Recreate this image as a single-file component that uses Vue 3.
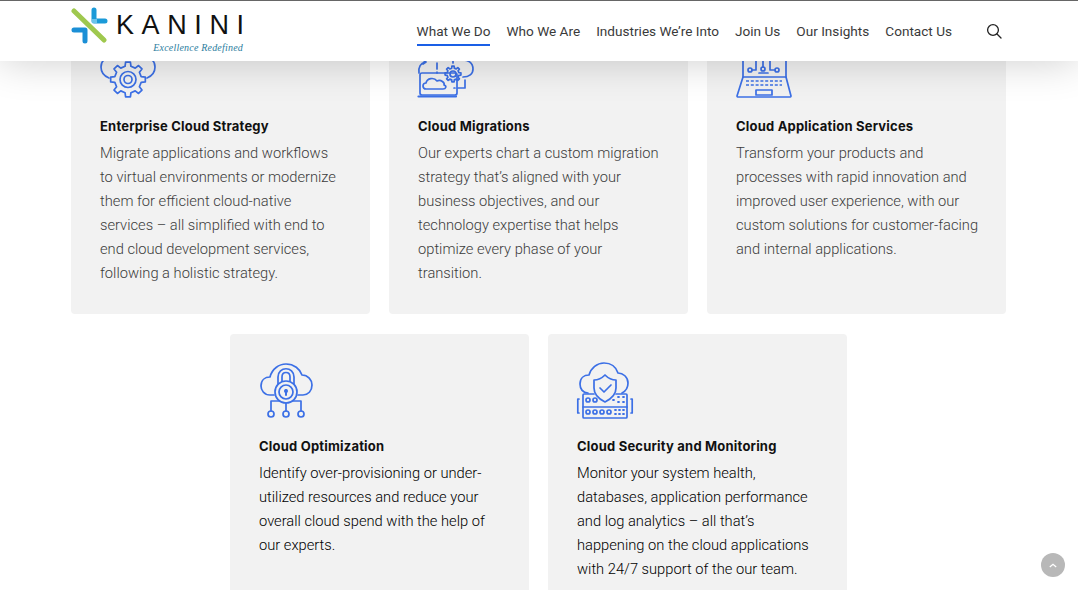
<template>
  <div class="page">
    <header class="site-header">
      <a class="logo" href="#">
        <svg class="logo-mark" viewBox="71 7 38 38" width="38" height="38">
          <path d="M94 10V21H105" fill="none" stroke="#1b9ad8" stroke-width="5" stroke-linecap="round" stroke-linejoin="round" />
          <path d="M74 30H85V41" fill="none" stroke="#1b8fd6" stroke-width="5" stroke-linecap="round" stroke-linejoin="round" />
          <path d="M74 11L104 40" fill="none" stroke="#9fc84e" stroke-width="5" stroke-linecap="round" />
          <rect x="92" y="19" width="5" height="4" fill="#6cc4ea" />
        </svg>
        <div class="logo-text">
          <span class="logo-name">KANINI</span>
          <span class="logo-tag">Excellence Redefined</span>
        </div>
      </a>
      <nav class="main-nav">
        <a v-for="item in navItems" :key="item" href="#" class="nav-link" :class="{ active: item === 'What We Do' }">{{ item }}</a>
      </nav>
      <svg class="search-icon" viewBox="0 0 16 16" width="16" height="16" fill="none" stroke="#222" stroke-width="1.3">
        <circle cx="7" cy="7" r="5.4" />
        <path d="M11 11L15 15" stroke-linecap="round" />
      </svg>
    </header>

    <main class="services">
      <section class="row" v-for="(row, r) in rows" :key="r" :class="'row-' + (r + 1)">
        <article class="card" v-for="card in row" :key="card.title">
          <svg class="card-icon" viewBox="0 0 56 56" width="56" height="56" fill="none" stroke="#3c70e6" stroke-width="1.7" stroke-linecap="round" stroke-linejoin="round">
            <template v-if="card.icon === 'gear'">
              <path d="M9 36C4 34 1 30 1 25C1 19 6 14 12 14C15 7 21 3 28 3C35 3 41 7 44 14C50 14 55 19 55 25C55 30 52 34 47 36" />
              <path :d="gearPath" />
              <circle cx="28" cy="37.5" r="8" />
              <circle cx="28" cy="37.5" r="4" />
            </template>
            <template v-else-if="card.icon === 'migrate'">
              <rect x="2" y="31" width="37" height="22" rx="2" />
              <path d="M0.5 54.500H38" stroke-width="2.200" />
              <path d="M8 47C4 47 4 41 8 41C9 36 16 35 19 39C23 37 27 41 26 43C29 44 28 47 25 47Z" />
              <path d="M1 31C0 25 3 21 7 20M5 18L8 20L5 22" />
              <path d="M19 21V27M19 30V31M35 18V21" />
              <path d="M43 18C50 17 55 21 55 27C55 32 51 35 45 35" />
              <path :d="smallGearPath" />
              <circle cx="35" cy="32" r="3" />
              <path d="M47 38V46H40M36 46H37" />
            </template>
            <template v-else-if="card.icon === 'laptop'">
              <path d="M7 35V14C7 12 8 11 10 11H47C49 11 50 12 50 14V35" />
              <path d="M7 35H50L55 54C55 55 54 55 53 55H3C2 55 1 55 1 54Z" />
              <circle cx="14" cy="28" r="2" />
              <circle cx="27" cy="27" r="2" />
              <circle cx="41" cy="28" r="2" />
              <path d="M16 28H20V18M27 25V18M39 28H34V18M23 31H32" />
              <path d="M10 39H46M10 43H46" stroke-dasharray="3 1.800" stroke-linecap="butt" stroke-width="1.700" />
              <rect x="20" y="48" width="16" height="5" />
            </template>
            <template v-else-if="card.icon === 'lock'">
              <path d="M15 33H11C5 33 2 28 2 24C2 18 6 15 11 15C13 7 20 2 27 2C35 2 41 7 43 13C49 13 53 18 53 23C53 29 49 33 44 33H39" />
              <circle cx="27" cy="30" r="11" />
              <circle cx="27" cy="30" r="7" />
              <path d="M19 22V15C19 4 35 4 35 15V22" />
              <path d="M23 19V15C23 9 31 9 31 15V19" />
              <path d="M27 28V33" stroke-width="2" />
              <circle cx="27" cy="29" r="1.200" fill="#3c70e6" />
              <path d="M27 41V49M20 39L12 39V49M34 39L42 39V49" />
              <circle cx="12" cy="52" r="3" />
              <circle cx="27" cy="52" r="3" />
              <circle cx="42" cy="52" r="3" />
            </template>
            <template v-else>
              <path d="M11 31C6 31 3 27 3 22C3 16 7 13 12 13C14 6 20 1 27 1C34 1 39 5 41 11C46 11 51 15 51 21C51 26 49 29 45 31" />
              <path d="M17 18C21 18 25 16 28 13C31 16 35 18 39 18V26C39 32 34 37 28 40C22 37 17 32 17 26Z" />
              <path d="M23 26L27 30L34 23" />
              <path d="M17 32H7C6.500 32 6 32.500 6 33V55C6 55.500 6.500 56 7 56H49C49.500 56 50 55.500 50 55V33C50 32.500 49.500 32 49 32H39" />
              <path d="M6 45H50" />
              <path d="M2 37H0.800V51H2M54 37H55.200V51H54" />
              <circle cx="11" cy="38" r="2" />
              <circle cx="18" cy="38" r="2" />
              <circle cx="11" cy="50" r="2" />
              <circle cx="18" cy="50" r="2" />
              <circle cx="25" cy="50" r="2" />
              <circle cx="32" cy="50" r="2" />
              <path d="M36 38H37M41 35H42M46 35H47M41 40H42M46 40H47M38 48H39M42 48H43M46 48H47M38 52H39M42 52H43M46 52H47" stroke-width="1.800" />
            </template>
          </svg>
          <h3 class="card-title">{{ card.title }}</h3>
          <p class="card-text">{{ card.text }}</p>
        </article>
      </section>
    </main>

    <a class="to-top" href="#">
      <svg viewBox="0 0 10 6" width="8" height="5" fill="none" stroke="#fff" stroke-width="1.600">
        <path d="M1 5L5 1.500L9 5" />
      </svg>
    </a>
  </div>
</template>

<script setup>
const navItems = ['What We Do', 'Who We Are', 'Industries We’re Into', 'Join Us', 'Our Insights', 'Contact Us']

const rows = [
  [
    {
      icon: 'gear',
      title: 'Enterprise Cloud Strategy',
      text: 'Migrate applications and workflows to virtual environments or modernize them for efficient cloud-native services – all simplified with end to end cloud development services, following a holistic strategy.'
    },
    {
      icon: 'migrate',
      title: 'Cloud Migrations',
      text: 'Our experts chart a custom migration strategy that’s aligned with your business objectives, and our technology expertise that helps optimize every phase of your transition.'
    },
    {
      icon: 'laptop',
      title: 'Cloud Application Services',
      text: 'Transform your products and processes with rapid innovation and improved user experience, with our custom solutions for customer-facing and internal applications.'
    }
  ],
  [
    {
      icon: 'lock',
      title: 'Cloud Optimization',
      text: 'Identify over-provisioning or under-utilized resources and reduce your overall cloud spend with the help of our experts.'
    },
    {
      icon: 'shield',
      title: 'Cloud Security and Monitoring',
      text: 'Monitor your system health, databases, application performance and log analytics – all that’s happening on the cloud applications with 24/7 support of the our team.'
    }
  ]
]

// teeth outline for the gear icons
const makeGear = (cx, cy, inner, outer, teeth) => {
  const pts = []
  const step = (Math.PI * 2) / teeth
  for (let i = 0; i < teeth; i++) {
    const a = i * step - Math.PI / 2
    const w = step * 0.22
    pts.push([a - step / 2 + w, inner], [a - w * 0.8, outer], [a + w * 0.8, outer], [a + step / 2 - w, inner])
  }
  return 'M' + pts.map(([a, r]) => `${(cx + Math.cos(a) * r).toFixed(2)} ${(cy + Math.sin(a) * r).toFixed(2)}`).join('L') + 'Z'
}

const gearPath = makeGear(28, 37.5, 13.5, 17.5, 8)
const smallGearPath = makeGear(35, 32, 6, 8, 8)
</script>

<style scoped>
.page {
  position: relative;
  height: 615px;
  overflow: hidden;
  background: #fff;
  font-family: Roboto, "Liberation Sans", sans-serif;
}

.site-header {
  position: absolute;
  top: 0;
  left: 0;
  right: 0;
  z-index: 5;
  height: 61px;
  box-sizing: border-box;
  display: flex;
  align-items: center;
  padding: 0 76px 0 71px;
  background: #fff;
  border-top: 1px solid #666;
  box-shadow: 0 0 42px rgba(0, 0, 0, 0.2);
}

.logo {
  display: flex;
  align-items: flex-start;
  gap: 7px;
  text-decoration: none;
  height: 60px;
}

.logo-mark {
  margin-top: 6px;
}

.logo-text {
  display: flex;
  flex-direction: column;
  width: 127px;
  margin-top: 11px;
}

.logo-name {
  font-family: "Liberation Sans", Arial, sans-serif;
  font-size: 27px;
  line-height: 27px;
  letter-spacing: 7.6px;
  color: #111;
  white-space: nowrap;
}

.logo-tag {
  font-family: "Liberation Serif", serif;
  font-style: italic;
  font-size: 10px;
  line-height: 12px;
  letter-spacing: 0.2px;
  color: #2d7d9e;
  text-align: right;
  white-space: nowrap;
  margin-top: 3px;
}

.main-nav {
  display: flex;
  gap: 16px;
  margin-left: auto;
  height: 100%;
}

.nav-link {
  position: relative;
  display: block;
  line-height: 60px;
  font-size: 13.6px;
  color: #3a3a3a;
  text-decoration: none;
  white-space: nowrap;
}

.nav-link.active::after {
  content: "";
  position: absolute;
  left: 0;
  right: 0;
  top: 43px;
  height: 2px;
  background: #1a5fe6;
}

.search-icon {
  margin-left: 34px;
  flex-shrink: 0;
}

.services {
  display: flex;
  flex-direction: column;
  gap: 20px;
  padding-top: 14px;
}

.row {
  display: flex;
  justify-content: center;
  gap: 19px;
  padding-right: 1px;
}

.card {
  width: 299px;
  box-sizing: border-box;
  padding: 28px 27px 29px 29px;
  background: #f2f2f2;
}

.row-1 .card {
  border-radius: 0 0 4px 4px;
  color: #3c3c3c;
}

.row-2 .card {
  padding-bottom: 9px;
  color: #000;
  border-radius: 4px 4px 0 0;
}

.card-icon {
  display: block;
  margin-bottom: 18px;
  overflow: visible;
}

.card-title {
  margin: 0 0 5px;
  font-family: Inter, "Open Sans", sans-serif;
  font-size: 13px;
  font-weight: 700;
  line-height: 20px;
  letter-spacing: 0.2px;
  color: #111;
}

.card-text {
  margin: 0;
  font-size: 14.7px;
  font-weight: 300;
  line-height: 24px;
}

.to-top {
  position: absolute;
  left: 1041px;
  top: 553px;
  width: 24px;
  height: 24px;
  border-radius: 50%;
  background: #b8b8b8;
  display: flex;
  align-items: center;
  justify-content: center;
}
</style>
